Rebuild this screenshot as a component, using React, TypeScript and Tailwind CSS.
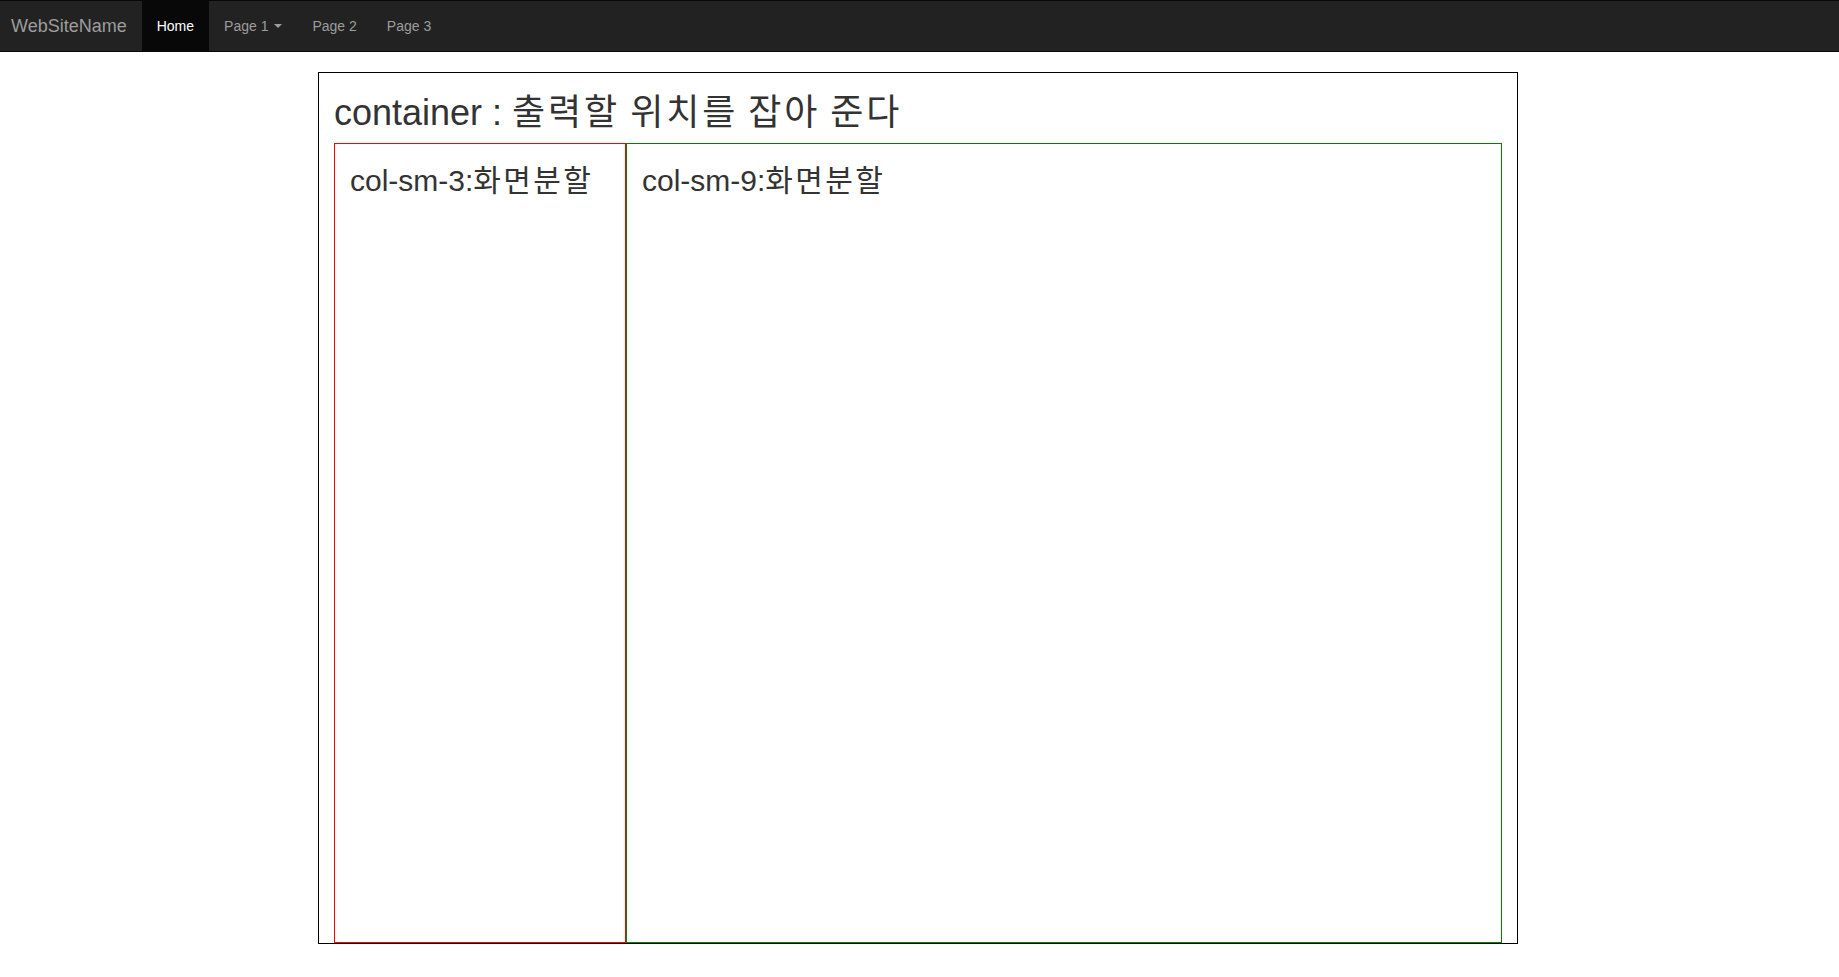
import React from "react";

const font = { fontFamily: '"Liberation Sans", "Noto Sans CJK KR", Arial, sans-serif' };

function Ko({ children }: { children: React.ReactNode }) {
  return <span className="tracking-[0.08em]">{children}</span>;
}

export default function App() {
  return (
    <div className="min-h-[977px] bg-white text-[#333]" style={font}>
      <nav className="flex h-[52px] border-y border-[#080808] bg-[#222] mb-[20px]">
        <a className="block h-[50px] pl-[11px] pr-[15px] py-[15px] text-[18px] leading-[20px] text-[#9d9d9d]">
          WebSiteName
        </a>
        <ul className="flex">
          <li>
            <a className="block h-[50px] px-[15px] py-[15px] text-[14px] leading-[20px] bg-[#080808] text-white">
              Home
            </a>
          </li>
          <li>
            <a className="flex items-center h-[50px] px-[15px] py-[15px] text-[14px] leading-[20px] text-[#9d9d9d]">
              Page 1
              <span className="ml-[6px] inline-block w-0 h-0 border-t-[4px] border-x-[4px] border-t-[#9d9d9d] border-x-transparent" />
            </a>
          </li>
          <li>
            <a className="block h-[50px] px-[15px] py-[15px] text-[14px] leading-[20px] text-[#9d9d9d]">
              Page 2
            </a>
          </li>
          <li>
            <a className="block h-[50px] px-[15px] py-[15px] text-[14px] leading-[20px] text-[#9d9d9d]">
              Page 3
            </a>
          </li>
        </ul>
      </nav>
      <div className="pr-[3px]">
        <div className="w-[1200px] mx-auto border border-black px-[15px]">
          <h1 className="mt-[20px] mb-[10px] text-[36px] leading-[1.1] font-normal">
            container : <Ko>출력할</Ko> <Ko>위치를</Ko> <Ko>잡아</Ko> <Ko>준다</Ko>
          </h1>
          <div className="flex">
            <div className="w-[292px] h-[800px] border border-[#ff0000] px-[15px]">
              <h2 className="mt-[20px] text-[30px] leading-[1.1] font-normal">
                col-sm-3:<Ko>화면분할</Ko>
              </h2>
            </div>
            <div className="w-[876px] h-[800px] border border-[#008000] px-[15px]">
              <h2 className="mt-[20px] text-[30px] leading-[1.1] font-normal">
                col-sm-9:<Ko>화면분할</Ko>
              </h2>
            </div>
          </div>
        </div>
      </div>
    </div>
  );
}
